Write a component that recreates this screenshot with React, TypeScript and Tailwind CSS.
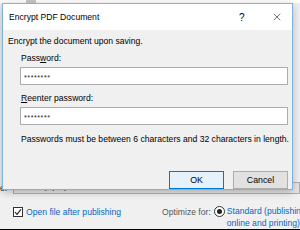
import { X } from 'lucide-react'

const font = { fontFamily: '"Liberation Sans", Arial, sans-serif' }

function Field({ value }: { value: string }) {
  return (
    <div className="ml-[17px] mr-[4px] h-[18px] border border-[#abadb3] bg-white flex items-center pl-[3px]">
      <span className="text-[7px] leading-none tracking-[0.6px] text-[#222] pt-[2px]">{value}</span>
    </div>
  )
}

function EncryptDialog() {
  return (
    <div className="absolute left-[2px] top-[3px] w-[291px] h-[187px] border border-[#7eb2e6] bg-[#f0f0f0] shadow-[0_2px_8px_rgba(0,0,0,0.25)] flex flex-col">
      {/* Title bar */}
      <div className="h-[26px] bg-white flex items-center shrink-0">
        <span className="pl-[6px] text-[8.6px] text-black flex-1">Encrypt PDF Document</span>
        <span className="text-[10px] text-black w-[8px] mr-[24px]">?</span>
        <X size={12} strokeWidth={1.1} className="mr-[9px] text-black" />
      </div>

      {/* Body */}
      <div className="flex flex-col text-[8.6px] text-black">
        <div className="pl-[5px] pt-[4px] h-[22px] leading-[15px]">Encrypt the document upon saving.</div>
        <div className="pl-[18px] h-[14px] leading-[14px] mt-[-1px]">
          Pass<span className="underline">w</span>ord:
        </div>
        <div className="mt-[2px]">
          <Field value="********" />
        </div>
        <div className="pl-[18px] h-[14px] leading-[14px] mt-[6px]">
          <span className="underline">R</span>eenter password:
        </div>
        <div className="mt-[2px]">
          <Field value="********" />
        </div>
        <div className="pl-[18px] mt-[7px] leading-[14px] whitespace-nowrap">
          Passwords must be between 6 characters and 32 characters in length.
        </div>
        <div className="flex justify-end gap-[9px] pr-[4px] mt-[25px]">
          <button className="w-[55px] h-[18px] border border-[#0078d7] bg-[#e5f1fb] text-[8.8px] leading-none">OK</button>
          <button className="w-[55px] h-[18px] border border-[#adadad] bg-[#e1e1e1] text-[8.8px] leading-none">Cancel</button>
        </div>
      </div>
    </div>
  )
}

export default function App() {
  return (
    <div className="relative w-[300px] h-[230px] overflow-hidden bg-[#f0f0f0]" style={font}>
      {/* Underlying publish window */}
      <div className="flex flex-col h-full">
        <div className="h-[3px] bg-white flex">
          <div className="ml-[26px] w-[10px] bg-[#c8c8c8]" />
        </div>
        <div className="h-[184px]" />
        <div className="flex items-center h-[12px]">
          <span className="w-[13px] text-[8.6px] text-[#333] leading-none overflow-hidden whitespace-nowrap">e:</span>
          <div className="flex-1 h-[12px] border border-[#adadad] bg-[#e5e5e5] pl-[10px] text-[8.6px] leading-[6px] text-[#222] overflow-hidden">
            PDF (*.pdf)
          </div>
        </div>
        <div className="flex items-start mt-[11px] text-[8.6px] whitespace-nowrap">
          <div className="ml-[13px] w-[10px] h-[10px] border border-[#333] bg-white flex items-center justify-center mt-[2px] shrink-0">
            <svg width="8" height="8" viewBox="0 0 8 8">
              <path d="M1 4.2 L3 6.3 L7 1.3" fill="none" stroke="#222" strokeWidth="1.1" />
            </svg>
          </div>
          <span className="ml-[3px] text-[#0066cc] leading-[14px]">Open file after publishing</span>
          <span className="ml-[41px] text-[#555] leading-[14px]">Optimize for:</span>
          <div className="ml-[3px] mt-[1px] w-[11px] h-[11px] rounded-full border border-[#333] bg-white flex items-center justify-center shrink-0">
            <div className="w-[5px] h-[5px] rounded-full bg-[#222]" />
          </div>
          <div className="ml-[2px] flex flex-col text-[#0066cc] leading-[12px]">
            <span>Standard (publishing</span>
            <span>online and printing)</span>
          </div>
        </div>
        <div className="flex-1" />
        <div className="h-[1px] bg-black" />
      </div>

      <EncryptDialog />
    </div>
  )
}
